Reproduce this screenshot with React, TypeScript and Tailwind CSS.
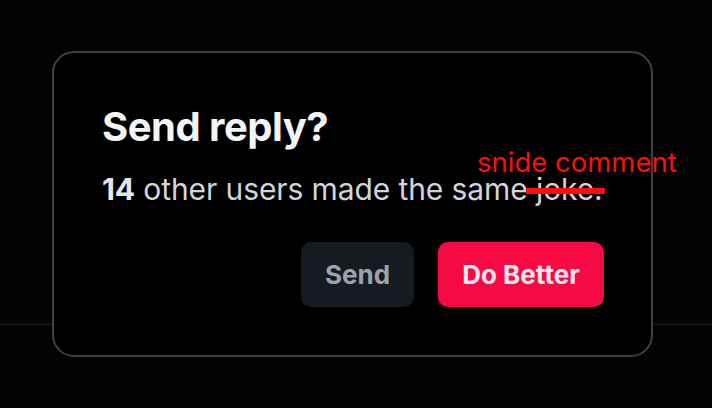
import React from "react";

export default function App() {
  return (
    <div
      className="relative w-[712px] h-[408px] bg-[#040404] overflow-hidden flex items-start pl-[52px] pt-[51px]"
      style={{ fontFamily: "Inter, 'Noto Sans', sans-serif" }}
    >
      <div className="absolute left-0 right-0 top-[324px] h-px bg-[#1c1c1c]" />
      <div className="relative w-[601px] h-[306px] rounded-[22px] border-2 border-[#3a414f] bg-black pl-[48px] pr-[47px] pt-[50px] flex flex-col">
        <h1 className="text-[40px] leading-[48px] font-bold text-[#f3f4f6] tracking-[-0.5px]">
          Send reply?
        </h1>
        <p className="mt-[20px] text-[30px] leading-[36px] text-[#d1d5db] tracking-[-0.1px] whitespace-nowrap">
          <span className="font-bold text-[#e5e7eb]">14</span> other users made the same{" "}
          <span className="relative">
            joke.
            <span className="absolute left-[-10px] w-[79px] top-[17px] h-[6px] bg-[#ff0d0d]" />
            <span className="absolute left-[-59px] top-[-26px] text-[27.5px] leading-[34px] tracking-normal text-[#ff0d0d] whitespace-nowrap">
              snide comment
            </span>
          </span>
        </p>
        <div className="mt-[35px] flex justify-end gap-[24px]">
          <button className="w-[113px] h-[65px] rounded-[10px] bg-[#161b22] text-[26px] font-bold text-[#9ca3af]">
            Send
          </button>
          <button className="w-[166px] h-[65px] rounded-[10px] bg-[#f50a44] text-[26px] font-bold text-[#fde7ef]">
            Do Better
          </button>
        </div>
      </div>
    </div>
  );
}
